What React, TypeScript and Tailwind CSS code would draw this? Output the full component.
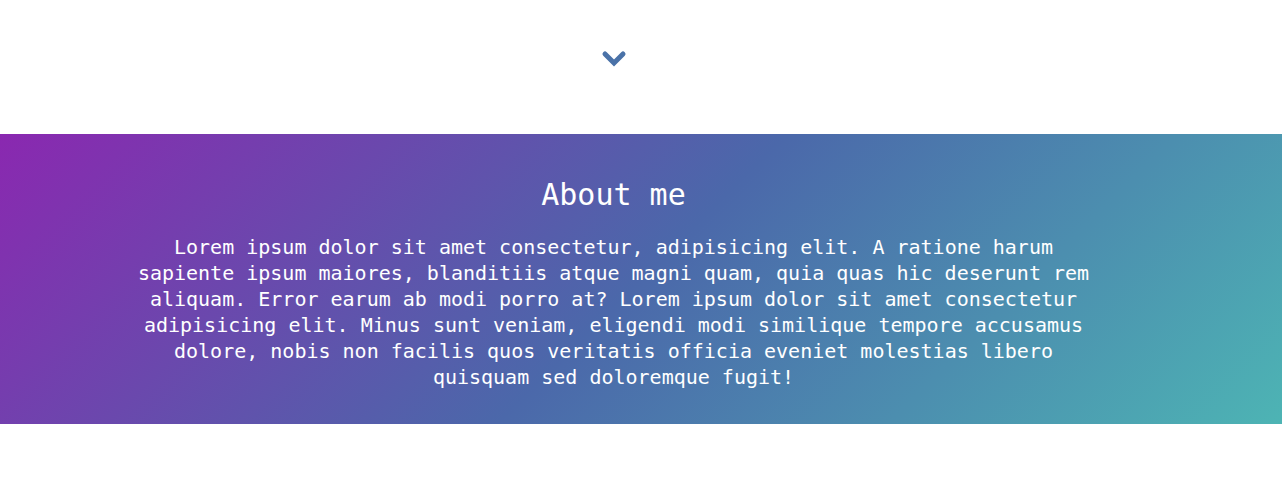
export default function App() {
    return (
        <div className="min-h-[485px] bg-white" style={{ fontFamily: '"DejaVu Sans Mono", "Liberation Mono", monospace' }}>
            {/* top area with scroll-down chevron */}
            <div className="h-[134px] pr-[55px] pt-[50px] flex justify-center items-start">
                <svg width="26" height="18" viewBox="0 0 26 18" className="text-[#4a72a8]">
                    <polyline points="4,4 13,13 22,4" fill="none" stroke="currentColor" strokeWidth="5" strokeLinecap="round" strokeLinejoin="miter" />
                </svg>
            </div>

            <section className="bg-[linear-gradient(135deg,#8a28b0_0%,#4b68aa_50%,#4db4b4_100%)] text-white pt-[43px] pb-[34px]">
                <div className="pr-[55px]">
                    <div className="max-w-[960px] mx-auto text-center">
                        <h2 className="text-[30px] leading-[36px] font-medium">About me</h2>
                        <p className="mt-[21px] text-[20px] leading-[26px]">
                            Lorem ipsum dolor sit amet consectetur, adipisicing elit. A ratione harum sapiente ipsum maiores, blanditiis atque magni quam, quia quas hic deserunt rem aliquam. Error earum ab modi porro at? Lorem ipsum dolor sit amet consectetur adipisicing elit. Minus sunt veniam, eligendi modi similique tempore accusamus dolore, nobis non facilis quos veritatis officia eveniet molestias libero quisquam sed doloremque fugit!
                        </p>
                    </div>
                </div>
            </section>
        </div>
    );
}
